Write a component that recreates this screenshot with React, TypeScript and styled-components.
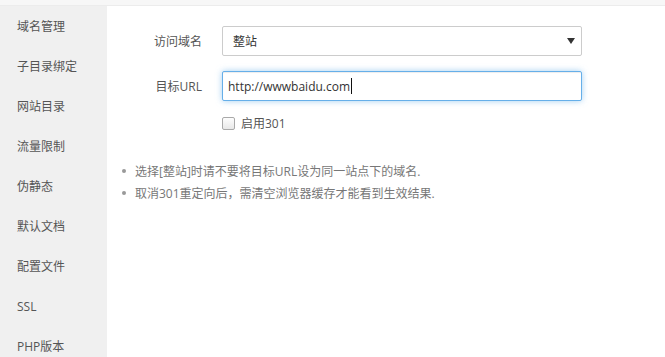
import React from "react";
import styled, { createGlobalStyle } from "styled-components";

const Global = createGlobalStyle`
  html, body { margin: 0; padding: 0; background: #fff; }
  body { font-family: "Open Sans", "Noto Sans CJK SC", sans-serif; font-size: 12px; color: #555; }
  * { box-sizing: border-box; }
`;

const Page = styled.div`
  width: 665px;
  height: 357px;
  display: flex;
  flex-direction: column;
  overflow: hidden;
`;

const TopStrip = styled.div`
  height: 6px;
  flex: none;
  background: #f7f7f7;
  border-bottom: 1px solid #ececec;
`;

const Body = styled.div`
  flex: 1;
  display: flex;
  min-height: 0;
`;

const Sidebar = styled.nav`
  width: 107px;
  flex: none;
  background: #f0f0f0;
  display: flex;
  flex-direction: column;
`;

const NavItem = styled.div`
  height: 40px;
  flex: none;
  display: flex;
  align-items: center;
  padding-left: 17px;
  font-size: 12px;
  color: #555;
  white-space: nowrap;
`;

const Content = styled.main`
  flex: 1;
  display: flex;
  flex-direction: column;
  padding-top: 20px;
`;

const FormRow = styled.div<{ $gap?: number }>`
  display: flex;
  align-items: center;
  margin-bottom: ${(p) => p.$gap ?? 15}px;
`;

const Label = styled.label`
  width: 95px;
  flex: none;
  text-align: right;
  margin-right: 20px;
  font-size: 12px;
  color: #555;
`;

const Spacer = styled.div`
  width: 115px;
  flex: none;
`;

const SelectBox = styled.div`
  width: 360px;
  height: 30px;
  border: 1px solid #ccc;
  border-radius: 2px;
  background: #fff;
  display: flex;
  align-items: center;
  justify-content: space-between;
  padding: 0 6px 0 10px;
  font-size: 12px;
  color: #333;
`;

const Arrow = styled.span`
  width: 0;
  height: 0;
  border-left: 4px solid transparent;
  border-right: 4px solid transparent;
  border-top: 6px solid #333;
`;

const InputBox = styled.div`
  width: 360px;
  height: 30px;
  border: 1px solid #66afe9;
  border-radius: 2px;
  background: #fff;
  box-shadow: inset 0 1px 1px rgba(0, 0, 0, 0.075), 0 0 6px rgba(102, 175, 233, 0.6);
  display: flex;
  align-items: center;
  padding: 0 5px;
  font-size: 12px;
  color: #333;
`;

const Caret = styled.span`
  display: inline-block;
  width: 1px;
  height: 16px;
  background: #111;
  margin-left: 1px;
`;

const CheckLabel = styled.label`
  display: flex;
  align-items: center;
  font-size: 12px;
  color: #555;
`;

const CheckBox = styled.span`
  width: 13px;
  height: 13px;
  border: 1px solid #a9a9a9;
  border-radius: 2px;
  background: linear-gradient(#fdfdfd, #e8e8e8);
  margin-right: 6px;
`;

const Notes = styled.ul`
  margin: 28px 0 0 0;
  padding: 0 0 0 15px;
  list-style: none;
`;

const Note = styled.li`
  display: flex;
  align-items: center;
  height: 22px;
  font-size: 12px;
  color: #777;
  &::before {
    content: "";
    width: 4px;
    height: 4px;
    border-radius: 50%;
    background: #999;
    margin-right: 9px;
    flex: none;
  }
`;

const navItems = ["域名管理", "子目录绑定", "网站目录", "流量限制", "伪静态", "默认文档", "配置文件", "SSL", "PHP版本"];

export default function App() {
  return (
    <Page>
      <Global />
      <TopStrip />
      <Body>
        <Sidebar>
          {navItems.map((n) => (
            <NavItem key={n}>{n}</NavItem>
          ))}
        </Sidebar>
        <Content>
          <FormRow>
            <Label>访问域名</Label>
            <SelectBox>
              <span>整站</span>
              <Arrow />
            </SelectBox>
          </FormRow>
          <FormRow $gap={13}>
            <Label>目标URL</Label>
            <InputBox>
              <span>http://wwwbaidu.com</span>
              <Caret />
            </InputBox>
          </FormRow>
          <FormRow $gap={0}>
            <Spacer />
            <CheckLabel>
              <CheckBox />
              启用301
            </CheckLabel>
          </FormRow>
          <Notes>
            <Note>选择[整站]时请不要将目标URL设为同一站点下的域名.</Note>
            <Note>取消301重定向后，需清空浏览器缓存才能看到生效结果.</Note>
          </Notes>
        </Content>
      </Body>
    </Page>
  );
}
